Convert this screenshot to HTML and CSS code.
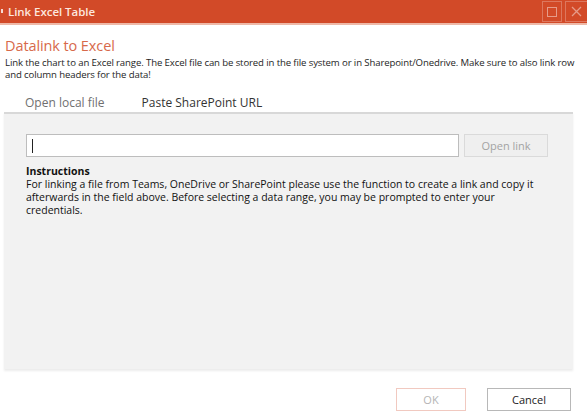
FILE: index.html
```html
<!DOCTYPE html>
<html>
<head>
<meta charset="utf-8">
<link rel="stylesheet" href="styles.css">
</head>
<body>
<div class="window">
  <div class="titlebar">
    <span class="appmark"></span>
    <span class="title">Link Excel Table</span>
    <div class="winbtns">
      <div class="winbtn"><svg width="10" height="10" viewBox="0 0 10 10"><rect x="0.5" y="0.5" width="9" height="9" fill="none" stroke="rgba(255,255,255,0.45)" stroke-width="1"/></svg></div>
      <div class="winbtn close"><svg width="11" height="11" viewBox="0 0 11 11"><path d="M1 1L10 10M10 1L1 10" stroke="rgba(255,255,255,0.45)" stroke-width="1.3"/></svg></div>
    </div>
  </div>
  <div class="titleline"></div>
  <div class="header">
    <div class="heading">Datalink to Excel</div>
    <div class="desc">Link the chart to an Excel range. The Excel file can be stored in the file system or in Sharepoint/Onedrive. Make sure to also link row and column headers for the data!</div>
  </div>
  <div class="tabs">
    <div class="tab">Open local file</div>
    <div class="tab active">Paste SharePoint URL</div>
  </div>
  <div class="panel">
    <div class="row">
      <div class="input"><span class="caret"></span></div>
      <div class="btn disabled">Open link</div>
    </div>
    <div class="instr">
      <div class="instr-title">Instructions</div>
      <div class="instr-text">For linking a file from Teams, OneDrive or SharePoint please use the function to create a link and copy it afterwards in the field above. Before selecting a data range, you may be prompted to enter your credentials.</div>
    </div>
  </div>
  <div class="footer">
    <div class="btn ok">OK</div>
    <div class="btn cancel">Cancel</div>
  </div>
</div>
</body>
</html>
```

FILE: styles.css
```css
* { box-sizing: border-box; }
html, body { margin: 0; padding: 0; background: #ffffff; }
body {
  width: 587px;
  height: 417px;
  overflow: hidden;
  font-family: "Open Sans", "Noto Sans", sans-serif;
  color: #222;
}
.window { width: 587px; height: 417px; display: flex; flex-direction: column; }
.titlebar {
  height: 23px;
  background: #d24a28;
  display: flex;
  align-items: center;
  position: relative;
}
.appmark {
  width: 2px;
  height: 4px;
  background: rgba(255,255,255,0.8);
  margin-left: 1px;
  margin-right: 5px;
  margin-top: -1px;
}
.title {
  color: #fde7df;
  font-size: 11.5px;
  font-weight: 600;
  letter-spacing: -0.05px;
}
.winbtns {
  margin-left: auto;
  display: flex;
  gap: 3px;
  align-self: flex-start;
  margin-top: 1px;
}
.winbtn {
  width: 20px;
  height: 21px;
  border: 1px solid rgba(255,255,255,0.25);
  display: flex;
  align-items: center;
  justify-content: center;
}
.winbtn.close { width: 22px; border-right: none; }
.titleline { height: 2px; background: #eeb9a8; }
.header { padding: 12px 5px 0 5px; }
.heading {
  color: #d7694b;
  font-size: 14.5px;
  line-height: 18px;
  letter-spacing: -0.1px;
}
.desc {
  font-size: 9.6px;
  line-height: 12px;
  margin-top: 2px;
  color: #1e1e1e;
  letter-spacing: -0.12px;
}
.tabs {
  display: flex;
  padding-left: 25px;
  gap: 37px;
  margin-top: 13px;
  height: 18px;
}
.tab {
  font-size: 12px;
  color: #707070;
  line-height: 18px;
}
.tab.active { color: #333; }
.panel {
  margin: 0 14px 0 4px;
  height: 257px;
  background: #f2f2f2;
  border-top: 2px solid #d8d8d8;
  box-shadow: 0 2px 2px rgba(0,0,0,0.08);
  padding: 20px 22px 0 22px;
}
.row { display: flex; gap: 5px; }
.input {
  width: 433px;
  height: 23px;
  background: #fff;
  border: 1px solid #bdbdbd;
  display: flex;
  align-items: center;
  padding-left: 5px;
}
.caret { width: 1px; height: 14px; background: #222; }
.btn {
  height: 23px;
  font-size: 11px;
  display: flex;
  align-items: center;
  justify-content: center;
}
.btn.disabled {
  width: 84px;
  background: #efefef;
  border: 1px solid #dadada;
  color: #a3a3a3;
}
.instr { margin-top: 8px; font-size: 10.5px; line-height: 13px; color: #111; }
.instr-title { font-weight: 700; }
.instr-text { width: 520px; }
.footer {
  display: flex;
  justify-content: flex-end;
  gap: 21px;
  padding-right: 16px;
  margin-top: 19px;
}
.btn.ok {
  width: 70px;
  border: 1px solid #f1c9c0;
  color: #b5b5b5;
  background: #fff;
}
.btn.cancel {
  width: 84px;
  border: 1px solid #b8b8b8;
  color: #222;
  background: #fff;
}
```
